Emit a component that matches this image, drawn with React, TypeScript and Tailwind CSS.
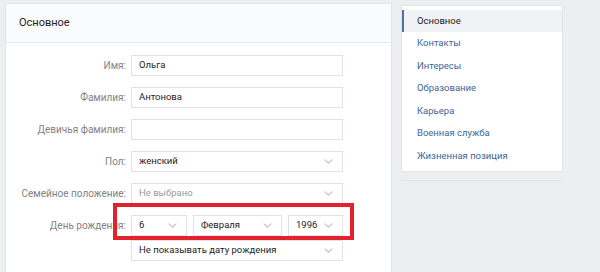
import React from "react";

const Chevron = () => (
  <svg width="9" height="5" viewBox="0 0 9 5" className="shrink-0">
    <path d="M1 0.8l3.5 3.4 3.5-3.4" fill="none" stroke="#b8bfc7" strokeWidth="1.1" strokeLinecap="round" strokeLinejoin="round" />
  </svg>
);

const Field = ({ value, placeholder }: { value?: string; placeholder?: boolean }) => (
  <div className="h-[21px] w-[212px] border border-[#dfe2e8] bg-white px-[7px] flex items-center text-[9.5px]">
    <span className={placeholder ? "text-[#999]" : "text-[#222]"}>{value}</span>
  </div>
);

const Select = ({ value, width, placeholder }: { value: string; width: string; placeholder?: boolean }) => (
  <div className={`h-[21px] ${width} border border-[#dfe2e8] bg-white pl-[7px] pr-[9px] flex items-center justify-between text-[9.5px]`}>
    <span className={placeholder ? "text-[#999]" : "text-[#222]"}>{value}</span>
    <Chevron />
  </div>
);

const Row = ({ label, children, className }: { label: string; children: React.ReactNode; className?: string }) => (
  <div className={`flex items-center ${className ?? ""}`}>
    <div className="w-[120px] whitespace-nowrap text-right text-[10px] text-[#828282]">{label}</div>
    <div className="ml-[5px]">{children}</div>
  </div>
);

const menu = ["Основное", "Контакты", "Интересы", "Образование", "Карьера", "Военная служба", "Жизненная позиция"];

export default function App() {
  return (
    <div className="w-[600px] h-[272px] overflow-hidden bg-[#edeef0] flex items-start gap-[9px] pl-[5px] pt-[3px]" style={{ fontFamily: "Roboto, 'Open Sans', Arial, sans-serif" }}>
      <div className="relative w-[387px] h-[290px] bg-white border border-[#e3e4e8] rounded-[2px]">
        <div className="h-[39px] bg-[#fafbfc] border-b border-[#e7e8ec] flex items-center px-[13px] text-[11px] text-[#222]">
          Основное
        </div>
        <div className="pt-[1px]">
          <Row label="Имя:" className="mt-[11px]"><Field value="Ольга" /></Row>
          <Row label="Фамилия:" className="mt-[11px]"><Field value="Антонова" /></Row>
          <Row label="Девичья фамилия:" className="mt-[11px]"><Field /></Row>
          <Row label="Пол:" className="mt-[11px]"><Select value="женский" width="w-[212px]" /></Row>
          <Row label="Семейное положение:" className="mt-[11px]"><Select value="Не выбрано" width="w-[212px]" placeholder /></Row>
          <Row label="День рождения:" className="mt-[11px]">
            <div className="flex gap-[6px]">
              <Select value="6" width="w-[56px]" />
              <Select value="Февраля" width="w-[89px]" />
              <Select value="1996" width="w-[55px]" />
            </div>
          </Row>
          <Row label="" className="mt-[4px]"><Select value="Не показывать дату рождения" width="w-[212px]" /></Row>
        </div>
        <div className="absolute left-[107px] top-[199px] w-[241px] h-[37px] border-[4px] border-[#e3222f]" />
      </div>
      <div className="mt-[2px] flex flex-col gap-[8px]">
        <div className="w-[162px] bg-white border border-[#e3e4e8] rounded-[2px] py-[4px]">
          {menu.map((m, i) => (
            <div
              key={m}
              className={
                i === 0
                  ? "h-[22px] flex items-center pl-[13px] border-l-2 border-[#56729a] bg-[#f0f2f5] text-[9.5px] text-[#222]"
                  : "h-[22.5px] flex items-center pl-[15px] text-[9.5px] text-[#3b6596]"
              }
            >
              {m}
            </div>
          ))}
        </div>
        <div className="w-[162px] h-[120px] border-t border-[#e3e4e8]" />
      </div>
    </div>
  );
}
